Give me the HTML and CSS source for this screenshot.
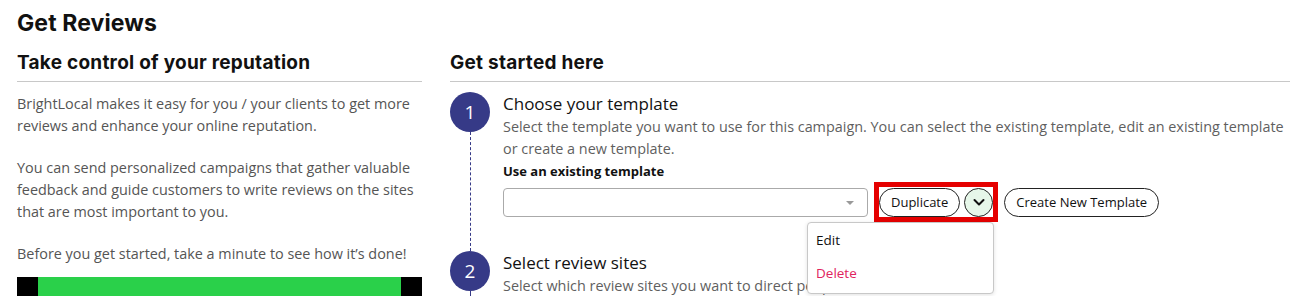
FILE: index.html
```html
<!DOCTYPE html>
<html>
<head>
<meta charset="utf-8">
<link rel="stylesheet" href="styles.css">
</head>
<body>
<h1 class="page-title">Get Reviews</h1>
<div class="columns">
  <section class="intro">
    <h2 class="section-title">Take control of your reputation</h2>
    <p class="text">BrightLocal makes it easy for you / your clients to get more reviews and enhance your online reputation.</p>
    <p class="text">You can send personalized campaigns that gather valuable feedback and guide customers to write reviews on the sites that are most important to you.</p>
    <p class="text">Before you get started, take a minute to see how it’s done!</p>
    <div class="video"><div class="video-inner"></div></div>
  </section>
  <section class="start">
    <h2 class="section-title">Get started here</h2>
    <div class="steps">
      <div class="step">
        <div class="step-rail"><div class="step-num">1</div><div class="step-line"></div></div>
        <div class="step-body">
          <div class="step-title">Choose your template</div>
          <div class="step-desc">Select the template you want to use for this campaign. You can select the existing template, edit an existing template or create a new template.</div>
          <div class="field-label">Use an existing template</div>
          <div class="controls">
            <div class="select"><span class="caret"></span></div>
            <div class="highlight">
              <button class="pill">Duplicate</button>
              <button class="circle-btn"><svg width="14" height="14" viewBox="0 0 14 14"><path d="M2.5 5 L7 9.5 L11.5 5" fill="none" stroke="#111" stroke-width="2" stroke-linecap="round" stroke-linejoin="round"/></svg></button>
              <div class="menu">
                <div class="menu-item">Edit</div>
                <div class="menu-item danger">Delete</div>
              </div>
            </div>
            <button class="pill">Create New Template</button>
          </div>
        </div>
      </div>
      <div class="step">
        <div class="step-rail"><div class="step-num">2</div><div class="step-line"></div></div>
        <div class="step-body">
          <div class="step-title">Select review sites</div>
          <div class="step-desc">Select which review sites you want to direct people to.</div>
        </div>
      </div>
    </div>
  </section>
</div>
</body>
</html>
```

FILE: styles.css
```css
* { box-sizing: border-box; }
html, body { margin: 0; padding: 0; background: #fff; overflow: hidden; }
body {
  padding: 8px 15px 0 17px;
  font-family: "Open Sans", "Liberation Sans", sans-serif;
  color: #111;
}
.page-title {
  margin: 0;
  font-family: Inter, "Liberation Sans", sans-serif;
  font-weight: 700;
  font-size: 23px;
  line-height: 30px;
  letter-spacing: 0.1px;
}
.columns {
  display: flex;
  gap: 28px;
  margin-top: 12px;
}
.intro { width: 405px; flex: none; }
.start { flex: 1; }
.section-title {
  margin: 0;
  font-family: Inter, "Liberation Sans", sans-serif;
  font-weight: 700;
  font-size: 19px;
  letter-spacing: 0.25px;
  line-height: 26px;
  padding-bottom: 5px;
  border-bottom: 1px solid #c8c8c8;
}
.text {
  margin: 0 0 20px;
  font-size: 14.4px;
  line-height: 22px;
  color: #555;
}
.text:first-of-type { margin-top: 11px; }
.text:last-of-type { margin-bottom: 12px; }
.video {
  height: 40px;
  background: #000;
  padding: 0 21px;
}
.video-inner { height: 100%; background: #2ad04a; }
.steps { padding-top: 10px; }
.step { display: flex; gap: 13px; }
.step-rail {
  width: 40px;
  flex: none;
  display: flex;
  flex-direction: column;
  align-items: center;
}
.step-num {
  width: 40px;
  height: 40px;
  border-radius: 50%;
  background: #363a87;
  color: #fff;
  font-size: 19px;
  display: flex;
  align-items: center;
  justify-content: center;
  flex: none;
}
.step-line {
  flex: 1;
  border-left: 1px dashed #363a87;
}
.step-body { flex: 1; }
.step-title {
  font-size: 17px;
  line-height: 24px;
  color: #111;
}
.step-desc {
  font-size: 14.4px;
  line-height: 22px;
  color: #5f5f5f;
}
.field-label {
  font-size: 13px;
  font-weight: 700;
  line-height: 22px;
  color: #111;
}
.controls {
  display: flex;
  align-items: center;
  gap: 6px;
  padding-bottom: 29px;
}
.select {
  width: 365px;
  height: 29px;
  border: 1px solid #aaa;
  border-radius: 4px;
  position: relative;
}
.caret {
  position: absolute;
  right: 13px;
  top: 12px;
  border-left: 4px solid transparent;
  border-right: 4px solid transparent;
  border-top: 4px solid #999;
}
.highlight {
  position: relative;
  display: flex;
  align-items: center;
  gap: 4px;
  border: 5px solid #e50000;
  height: 40px;
}
.pill {
  height: 29px;
  border: 1px solid #222;
  border-radius: 15px;
  background: #fff;
  padding: 0 11px;
  font-family: "Open Sans", "Liberation Sans", sans-serif;
  font-size: 13px;
  color: #111;
  cursor: pointer;
}
.circle-btn {
  width: 29px;
  height: 29px;
  border: 1px solid #222;
  border-radius: 50%;
  background: #e6f7e9;
  padding: 0;
  display: flex;
  align-items: center;
  justify-content: center;
}
.menu {
  position: absolute;
  top: 35px;
  left: -72px;
  width: 187px;
  background: #fff;
  border: 1px solid #c8c8c8;
  border-radius: 4px;
  box-shadow: 0 1px 4px rgba(0,0,0,0.12);
  padding: 6px 0 9px;
  z-index: 5;
}
.menu-item {
  font-size: 13.5px;
  line-height: 22px;
  padding: 0 8px;
  color: #111;
}
.menu-item + .menu-item { margin-top: 11px; }
.danger { color: #e0245e; }
```
